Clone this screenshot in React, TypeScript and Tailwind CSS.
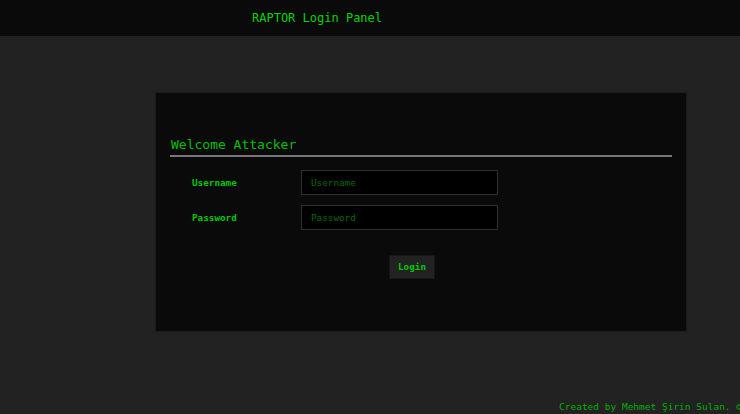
import React from "react";

export default function App() {
  const mono = { fontFamily: '"DejaVu Sans Mono", "Liberation Mono", monospace' };
  return (
    <div className="w-[740px] h-[414px] bg-[#222222] flex flex-col overflow-hidden" style={mono}>
      <div className="h-[36px] bg-[#0a0a0a] flex items-center pl-[252px] shrink-0">
        <span className="text-[12px] text-[#00d400] leading-none">RAPTOR Login Panel</span>
      </div>
      <div className="pl-[156px] pt-[57px]">
        <div className="w-[530px] h-[238px] bg-[#0a0a0a] px-[14px] pt-[44px] shadow-[0_0_2px_rgba(0,0,0,0.6)]">
          <div className="border-b-2 border-[#777777] pb-[2px] pl-px">
            <h1 className="text-[13px] leading-[16px] text-[#00c000]">Welcome Attacker</h1>
          </div>
          <div className="pl-[22px] pt-[13px] flex flex-col gap-[10px]">
            <div className="flex items-center">
              <label className="w-[109px] text-[9.3px] font-bold text-[#00c800]">Username</label>
              <input
                placeholder="Username"
                className="w-[197px] h-[25px] bg-black border border-[#2e2e2e] px-[9px] text-[9.3px] text-[#00c000] placeholder:text-[#006a00] outline-none"
                style={mono}
              />
            </div>
            <div className="flex items-center">
              <label className="w-[109px] text-[9.3px] font-bold text-[#00c800]">Password</label>
              <input
                type="password"
                placeholder="Password"
                className="w-[197px] h-[25px] bg-black border border-[#2e2e2e] px-[9px] text-[9.3px] text-[#00c000] placeholder:text-[#006a00] outline-none"
                style={mono}
              />
            </div>
          </div>
          <div className="pl-[219px] pt-[25px]">
            <button
              className="w-[46px] h-[24px] bg-[#222222] border border-[#161616] text-[9.3px] font-bold text-[#00c800] flex items-center justify-center"
              style={mono}
            >
              Login
            </button>
          </div>
        </div>
      </div>
      <div className="mt-auto pl-[559px] pb-[1px] whitespace-nowrap text-[9.5px] leading-[12px] text-[#00b000]">
        Created by Mehmet Şirin Sulan. © 2018
      </div>
    </div>
  );
}
